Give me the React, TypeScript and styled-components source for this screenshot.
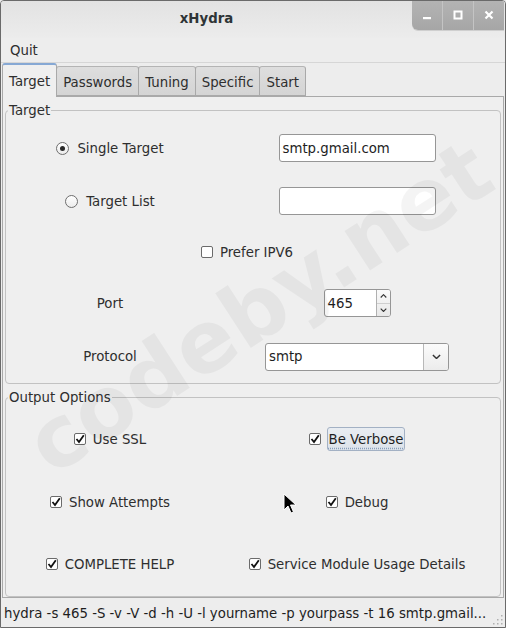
import React from 'react';
import styled, { createGlobalStyle } from 'styled-components';

const GlobalStyle = createGlobalStyle`
  html, body {
    margin: 0;
    padding: 0;
    background: #ededed;
  }
  body {
    font-family: "DejaVu Sans", "Liberation Sans", sans-serif;
    font-size: 13.3px;
    color: #2e2e2e;
  }
`;

const Window = styled.div`
    position: relative;
    width: 506px;
    height: 628px;
    box-sizing: border-box;
    border: 1px solid #6a6a6a;
    border-radius: 4px 4px 0 0;
    background: #ededed;
    display: flex;
    flex-direction: column;
    overflow: hidden;
`;

const TitleBar = styled.div`
    flex-shrink: 0;
    height: 37px;
    display: flex;
    align-items: flex-start;
    background: linear-gradient(#e2e2e2, #ececec);
`;

const Title = styled.div`
    flex: 1;
    text-align: center;
    font-weight: bold;
    line-height: 36px;
    color: #2e3436;
`;

const WinButtons = styled.div`
    display: flex;
    height: 30px;
    margin-top: -1px;
    margin-right: 1px;
    border-bottom-left-radius: 6px;
    overflow: hidden;
    background: linear-gradient(#b4b4b4, #a6a6a6);
    box-shadow: 0 1px 0 #cfcfcf;
`;

const WinButton = styled.div`
    width: 30px;
    display: flex;
    align-items: center;
    justify-content: center;
    border-left: 1px solid #c4c4c4;
    &:first-child { border-left: none; }
`;

const MenuBar = styled.div`
    flex-shrink: 0;
    height: 24px;
    border-bottom: 1px solid #d6d6d6;
    display: flex;
    align-items: center;
    padding-left: 9px;
`;

const TabRow = styled.div`
    flex-shrink: 0;
    height: 33px;
    display: flex;
    align-items: flex-end;
    padding-left: 1px;
    position: relative;
    z-index: 1;
`;

const Tab = styled.div<{ $active?: boolean }>`
    box-sizing: border-box;
    height: ${p => (p.$active ? '34px' : '30px')};
    margin-bottom: ${p => (p.$active ? '-1px' : '0')};
    padding: 0 6px;
    display: flex;
    align-items: center;
    padding-top: ${p => (p.$active ? '1px' : '2px')};
    border: 1px solid #a9a9a9;
    border-bottom: ${p => (p.$active ? 'none' : '1px solid #a9a9a9')};
    border-top: ${p => (p.$active ? '2px solid #86a8d4' : '1px solid #b4b4b4')};
    border-radius: 3px 3px 0 0;
    background: ${p => (p.$active ? '#efefef' : 'linear-gradient(#dedede, #d4d4d4)')};
    & + & { margin-left: -1px; }
`;

const Page = styled.div`
    flex: 1;
    min-height: 0;
    margin: 0 1px;
    border: 1px solid #a9a9a9;
    padding: 5px 2px 1px 2px;
    display: flex;
    flex-direction: column;
    gap: 5px;
    background: #efefef;
    overflow: hidden;
`;

const Frame = styled.fieldset<{ $pad?: number }>`
    flex-shrink: 0;
    margin: 0;
    padding: ${p => p.$pad ?? 0}px 0 0 0;
    border: 1px solid #c2c2c2;
    border-radius: 4px;
    min-inline-size: 0;
`;

const FrameLabel = styled.legend`
    padding: 0 1px;
    margin-left: 2px;
    line-height: 17px;
`;

const FrameGrid = styled.div`
    display: grid;
    grid-template-columns: 208px 1fr;
`;

const Cell = styled.div<{ $h: number; $span?: boolean; $shift?: number }>`
    height: ${p => p.$h}px;
    grid-column: ${p => (p.$span ? '1 / 3' : 'auto')};
    display: flex;
    align-items: center;
    justify-content: center;
    padding-right: ${p => p.$shift || 0}px;
`;

const Choice = styled.div<{ $gap?: number }>`
    display: flex;
    align-items: center;
    gap: ${p => p.$gap ?? 7}px;
`;

const Box = styled.span`
    width: 12px;
    height: 12px;
    box-sizing: border-box;
    border: 1px solid #6b6b6b;
    border-radius: 2px;
    background: #fff;
    display: flex;
    align-items: center;
    justify-content: center;
`;

const Round = styled.span`
    width: 13px;
    height: 13px;
    box-sizing: border-box;
    border: 1px solid #6e6e6e;
    border-radius: 50%;
    background: linear-gradient(#ffffff, #ececec);
    display: flex;
    align-items: center;
    justify-content: center;
`;

const Dot = styled.span`
    width: 5px;
    height: 5px;
    border-radius: 50%;
    background: #2a2a2a;
`;

const Focused = styled.span`
    height: 24px;
    box-sizing: border-box;
    padding: 0 1px;
    margin-left: -1px;
    display: flex;
    align-items: center;
    border: 1px solid #a3b1c4;
    border-radius: 3px;
    background: linear-gradient(#e9edf2, #dde3ea);
    text-decoration: underline dotted #8aa0bd;
    text-underline-offset: 4px;
    color: #1e1e1e;
`;

const Entry = styled.div<{ $w: number }>`
    width: ${p => p.$w}px;
    height: 28px;
    box-sizing: border-box;
    border: 1px solid #969696;
    border-radius: 3px;
    background: #fff;
    display: flex;
    align-items: center;
    padding-left: 3px;
    color: #1e1e1e;
`;

const Spin = styled.div`
    width: 67px;
    height: 28px;
    box-sizing: border-box;
    border: 1px solid #969696;
    border-radius: 3px;
    background: #fff;
    display: flex;
    overflow: hidden;
`;

const SpinText = styled.div`
    flex: 1;
    display: flex;
    align-items: center;
    padding-left: 3px;
    color: #1e1e1e;
`;

const SpinButtons = styled.div`
    width: 13px;
    border-left: 1px solid #b0b0b0;
    display: flex;
    flex-direction: column;
    background: linear-gradient(#fafafa, #e8e8e8);
`;

const SpinHalf = styled.div`
    flex: 1;
    display: flex;
    align-items: center;
    justify-content: center;
    & + & { border-top: 1px solid #cfcfcf; }
`;

const Combo = styled.div`
    width: 184px;
    height: 28px;
    box-sizing: border-box;
    border: 1px solid #969696;
    border-radius: 3px;
    background: #fff;
    display: flex;
    overflow: hidden;
`;

const ComboText = styled.div`
    flex: 1;
    display: flex;
    align-items: center;
    padding-left: 3px;
    color: #1e1e1e;
`;

const ComboArrow = styled.div`
    width: 24px;
    border-left: 1px solid #b8b8b8;
    display: flex;
    align-items: center;
    justify-content: center;
    background: linear-gradient(#fbfbfb, #ececec);
`;

const StatusBar = styled.div`
    flex-shrink: 0;
    height: 29px;
    position: relative;
    display: flex;
    align-items: center;
    padding-left: 3px;
    padding-top: 2px;
    box-sizing: border-box;
    white-space: nowrap;
    color: #1e1e1e;
`;

const Grip = styled.svg`
    position: absolute;
    right: 2px;
    bottom: 2px;
`;

const Watermark = styled.div`
    position: absolute;
    left: 258px;
    top: 306px;
    transform: translate(-50%, -50%) rotate(-33deg);
    font-family: "DejaVu Sans", sans-serif;
    font-weight: bold;
    font-size: 86px;
    color: rgba(0, 0, 0, 0.045);
    white-space: nowrap;
    pointer-events: none;
    z-index: 5;
`;

const Pointer = styled.svg`
    position: absolute;
    left: 282px;
    top: 492px;
    z-index: 6;
`;

const Check = ({ checked }: { checked?: boolean }) => (
    <Box>
        {checked && (
            <svg width="10" height="10" viewBox="0 0 10 10">
                <path d="M1.5 5 L4 8 L8.8 1.2" fill="none" stroke="#111" strokeWidth="1.8" />
            </svg>
        )}
    </Box>
);

const Radio = ({ checked }: { checked?: boolean }) => <Round>{checked && <Dot />}</Round>;

const Chevron = ({ up, size = 7 }: { up?: boolean; size?: number }) => (
    <svg width={size} height={size * 0.6} viewBox="0 0 10 6">
        <path d={up ? 'M1 5 L5 1 L9 5' : 'M1 1 L5 5 L9 1'} fill="none" stroke="#333" strokeWidth="1.6" />
    </svg>
);

const targetRows = [52, 54, 48, 54, 53];
const outputRows = [66, 60, 64];

const tabs = ['Target', 'Passwords', 'Tuning', 'Specific', 'Start'];

export default function App() {
    return (
        <Window>
            <GlobalStyle />
            <TitleBar>
                <Title>xHydra</Title>
                <WinButtons>
                    <WinButton>
                        <svg width="10" height="10" viewBox="0 0 10 10">
                            <rect x="1" y="7" width="8" height="2.2" fill="#fff" />
                        </svg>
                    </WinButton>
                    <WinButton>
                        <svg width="10" height="10" viewBox="0 0 10 10">
                            <rect x="1.5" y="1.5" width="7" height="7" fill="none" stroke="#fff" strokeWidth="2" />
                        </svg>
                    </WinButton>
                    <WinButton>
                        <svg width="10" height="10" viewBox="0 0 10 10">
                            <path d="M1.5 1.5 L8.5 8.5 M8.5 1.5 L1.5 8.5" stroke="#fff" strokeWidth="2.2" />
                        </svg>
                    </WinButton>
                </WinButtons>
            </TitleBar>
            <MenuBar>Quit</MenuBar>
            <TabRow>
                {tabs.map((t, i) => (
                    <Tab key={t} $active={i === 0}>{t}</Tab>
                ))}
            </TabRow>
            <Page>
                <Frame $pad={3}>
                    <FrameLabel>Target</FrameLabel>
                    <FrameGrid>
                        <Cell $h={targetRows[0]}>
                            <Choice $gap={8}><Radio checked />Single Target</Choice>
                        </Cell>
                        <Cell $h={targetRows[0]}>
                            <Entry $w={157}>smtp.gmail.com</Entry>
                        </Cell>
                        <Cell $h={targetRows[1]}>
                            <Choice $gap={8}><Radio />Target List</Choice>
                        </Cell>
                        <Cell $h={targetRows[1]}>
                            <Entry $w={157} />
                        </Cell>
                        <Cell $h={targetRows[2]} $span $shift={12}>
                            <Choice><Check />Prefer IPV6</Choice>
                        </Cell>
                        <Cell $h={targetRows[3]}>Port</Cell>
                        <Cell $h={targetRows[3]}>
                            <Spin>
                                <SpinText>465</SpinText>
                                <SpinButtons>
                                    <SpinHalf><Chevron up /></SpinHalf>
                                    <SpinHalf><Chevron /></SpinHalf>
                                </SpinButtons>
                            </Spin>
                        </Cell>
                        <Cell $h={targetRows[4]}>Protocol</Cell>
                        <Cell $h={targetRows[4]}>
                            <Combo>
                                <ComboText>smtp</ComboText>
                                <ComboArrow><Chevron size={9} /></ComboArrow>
                            </Combo>
                        </Cell>
                    </FrameGrid>
                </Frame>
                <Frame>
                    <FrameLabel>Output Options</FrameLabel>
                    <FrameGrid>
                        <Cell $h={outputRows[0]}>
                            <Choice><Check checked />Use SSL</Choice>
                        </Cell>
                        <Cell $h={outputRows[0]}>
                            <Choice><Check checked /><Focused>Be Verbose</Focused></Choice>
                        </Cell>
                        <Cell $h={outputRows[1]}>
                            <Choice><Check checked />Show Attempts</Choice>
                        </Cell>
                        <Cell $h={outputRows[1]}>
                            <Choice><Check checked />Debug</Choice>
                        </Cell>
                        <Cell $h={outputRows[2]}>
                            <Choice><Check checked />COMPLETE HELP</Choice>
                        </Cell>
                        <Cell $h={outputRows[2]}>
                            <Choice><Check checked />Service Module Usage Details</Choice>
                        </Cell>
                    </FrameGrid>
                </Frame>
            </Page>
            <StatusBar>
                hydra -s 465 -S -v -V -d -h -U -l yourname -p yourpass -t 16 smtp.gmail...
                <Grip width="12" height="12" viewBox="0 0 12 12">
                    {[[10, 2], [10, 6], [6, 6], [10, 10], [6, 10], [2, 10]].map(([x, y]) => (
                        <rect key={`${x}-${y}`} x={x} y={y} width="1.5" height="1.5" fill="#b0b0b0" />
                    ))}
                </Grip>
            </StatusBar>
            <Watermark>codeby.net</Watermark>
            <Pointer width="14" height="22" viewBox="0 0 14 22">
                <path d="M1 1 L1 17 L5 13 L8 20 L10.5 19 L7.5 12 L13 12 Z" fill="#000" stroke="#fff" strokeWidth="1" />
            </Pointer>
        </Window>
    );
}
